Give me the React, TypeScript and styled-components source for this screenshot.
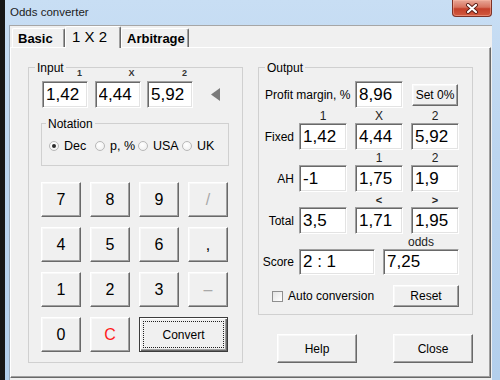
import { createGlobalStyle, styled } from 'styled-components';

const GlobalStyle = createGlobalStyle`
    html, body {
        margin: 0;
        padding: 0;
        background: #1b1b1b;
    }
    body {
        width: 500px;
        height: 380px;
        overflow: hidden;
        font-family: "Liberation Sans", Arial, sans-serif;
        color: #000;
    }
    * {
        box-sizing: border-box;
    }
`;

const App = () => {
    return (
        <>
            <GlobalStyle />
            <Screen>
                <DesktopEdge />
                <Window>
                    <TitleBar>
                        <Title>Odds converter</Title>
                        <CloseButton>
                            <svg width="14" height="11" viewBox="0 0 14 11">
                                <path d="M3 2 L11 9 M11 2 L3 9" stroke="#5a1c14" strokeWidth="4" strokeLinecap="round" />
                                <path d="M3 2 L11 9 M11 2 L3 9" stroke="#ffffff" strokeWidth="2.2" strokeLinecap="round" />
                            </svg>
                        </CloseButton>
                    </TitleBar>
                    <Client>
                        <TabStrip>
                            <Tab $w={53}>Basic</Tab>
                            <Tab $w={56} $active>1 X 2</Tab>
                            <Tab $w={68}>Arbitrage</Tab>
                        </TabStrip>
                        <Panel>
                            <InputSide />
                            <OutputSide />
                        </Panel>
                    </Client>
                </Window>
            </Screen>
        </>
    );
};

const InputSide = () => {
    const keys = ['7', '8', '9', '/', '4', '5', '6', ',', '1', '2', '3', '–', '0', 'C'];
    return (
        <Group $w={215}>
            <Caption $indent={6}>Input</Caption>
            <SmallHeads>
                <SmallHead>1</SmallHead>
                <SmallHead>X</SmallHead>
                <SmallHead>2</SmallHead>
            </SmallHeads>
            <InputRow>
                <InputCells>
                    <TextBox defaultValue="1,42" />
                    <TextBox defaultValue="4,44" />
                    <TextBox defaultValue="5,92" />
                </InputCells>
                <Arrow width="9" height="13" viewBox="0 0 9 13">
                    <polygon points="9,0 9,13 0,6.5" fill="#7b7b7b" />
                </Arrow>
            </InputRow>
            <NotationGroup>
                <Caption $indent={4}>Notation</Caption>
                <RadioRow>
                    <RadioItem $w={46}><Radio $checked />Dec</RadioItem>
                    <RadioItem $w={43}><Radio />p, %</RadioItem>
                    <RadioItem $w={44}><Radio />USA</RadioItem>
                    <RadioItem><Radio />UK</RadioItem>
                </RadioRow>
            </NotationGroup>
            <Keypad>
                {keys.map((k) => (
                    <Key key={k} $tone={k === 'C' ? 'red' : k === '/' || k === '–' ? 'dim' : 'normal'}>
                        {k}
                    </Key>
                ))}
                <ConvertButton>Convert</ConvertButton>
            </Keypad>
        </Group>
    );
};

const OutputSide = () => {
    return (
        <RightColumn>
            <Group $w={215} $pb={7}>
                <Caption $indent={6}>Output</Caption>
                <ProfitRow>
                    <ProfitLabel>Profit margin, %</ProfitLabel>
                    <TextBox $w={48} defaultValue="8,96" />
                    <SmallButton>Set 0%</SmallButton>
                </ProfitRow>
                <HeadRow>
                    <Cells>
                        <ColHead>1</ColHead>
                        <ColHead>X</ColHead>
                        <ColHead>2</ColHead>
                    </Cells>
                </HeadRow>
                <DataRow>
                    <RowLabel>Fixed</RowLabel>
                    <Cells>
                        <TextBox $w={48} defaultValue="1,42" />
                        <TextBox $w={48} defaultValue="4,44" />
                        <TextBox $w={48} defaultValue="5,92" />
                    </Cells>
                </DataRow>
                <HeadRow>
                    <Cells>
                        <ColHead />
                        <ColHead>1</ColHead>
                        <ColHead>2</ColHead>
                    </Cells>
                </HeadRow>
                <DataRow>
                    <RowLabel>AH</RowLabel>
                    <Cells>
                        <TextBox $w={48} defaultValue="-1" />
                        <TextBox $w={48} defaultValue="1,75" />
                        <TextBox $w={48} defaultValue="1,9" />
                    </Cells>
                </DataRow>
                <HeadRow>
                    <Cells>
                        <ColHead />
                        <ColHead $bold>&lt;</ColHead>
                        <ColHead $bold>&gt;</ColHead>
                    </Cells>
                </HeadRow>
                <DataRow>
                    <RowLabel>Total</RowLabel>
                    <Cells>
                        <TextBox $w={48} defaultValue="3,5" />
                        <TextBox $w={48} defaultValue="1,71" />
                        <TextBox $w={48} defaultValue="1,95" />
                    </Cells>
                </DataRow>
                <HeadRow>
                    <WideCells>
                        <ColHead />
                        <ColHead>odds</ColHead>
                    </WideCells>
                </HeadRow>
                <DataRow $h={26}>
                    <RowLabel>Score</RowLabel>
                    <WideCells>
                        <TextBox $w={76} $h={26} defaultValue="2 : 1" />
                        <TextBox $w={76} $h={26} defaultValue="7,25" />
                    </WideCells>
                </DataRow>
                <OptionRow>
                    <CheckBox />
                    <OptionText>Auto conversion</OptionText>
                    <SmallButton $w={66} $push>Reset</SmallButton>
                </OptionRow>
            </Group>
            <DialogButtons>
                <DialogButton>Help</DialogButton>
                <DialogButton>Close</DialogButton>
            </DialogButtons>
        </RightColumn>
    );
};

export default App;


const Screen = styled.div`
    display: flex;
    width: 500px;
    height: 380px;
`;

const DesktopEdge = styled.div`
    width: 5px;
    background: #171717;
`;

const Window = styled.div`
    flex: 1;
    display: flex;
    flex-direction: column;
    background: linear-gradient(180deg, #c8def4 0%, #bcd5ef 40%, #b3cfec 100%);
`;

const TitleBar = styled.div`
    height: 25px;
    display: flex;
    justify-content: space-between;
    align-items: flex-start;
    padding-left: 5px;
`;

const Title = styled.div`
    margin-top: 5px;
    font-size: 11.5px;
    line-height: 14px;
    color: #1c1c1c;
`;

const CloseButton = styled.div`
    width: 40px;
    height: 17px;
    margin-right: 8px;
    display: flex;
    align-items: center;
    justify-content: center;
    border: 1px solid #7d3126;
    border-top: none;
    border-radius: 0 0 4px 4px;
    background: linear-gradient(180deg, #e8a898 0%, #d7735f 45%, #c4402a 55%, #d25a3f 100%);
    box-shadow: inset 0 0 0 1px rgba(255, 190, 170, 0.45);
`;

const Client = styled.div`
    flex: 1;
    display: flex;
    flex-direction: column;
    margin: 0 8px 0 4px;
    padding-bottom: 2px;
    background: #f0f0f0;
    border-left: 1px solid #9aaabb;
    border-top: 1px solid #a6a6a6;
`;

const TabStrip = styled.div`
    height: 21px;
    display: flex;
    align-items: flex-end;
    padding-left: 2px;
`;

const Tab = styled.div<{ $w: number; $active?: boolean }>`
    position: relative;
    z-index: ${(p) => (p.$active ? 1 : 0)};
    width: ${(p) => p.$w}px;
    height: ${(p) => (p.$active ? 22 : 19)}px;
    margin-bottom: ${(p) => (p.$active ? -1 : 0)}px;
    padding-left: ${(p) => (p.$active ? 6 : 5)}px;
    padding-top: ${(p) => (p.$active ? 2 : 2)}px;
    background: #f0f0f0;
    border-top: 1px solid #ffffff;
    border-left: 1px solid #ffffff;
    border-right: 1px solid #696969;
    box-shadow: inset -1px 0 0 #a0a0a0;
    border-radius: 2px 2px 0 0;
    font-size: ${(p) => (p.$active ? 15 : 13)}px;
    font-weight: ${(p) => (p.$active ? 'normal' : 'bold')};
    line-height: 16px;
    white-space: nowrap;
`;

const Panel = styled.div`
    flex: 1;
    display: flex;
    align-items: flex-start;
    gap: 15px;
    margin-right: 1px;
    padding: 19px 0 0 17px;
    border: 1px solid;
    border-color: #ffffff #696969 #696969 #ffffff;
    box-shadow: inset -1px -1px 0 #a0a0a0;
`;

const Group = styled.div<{ $w?: number; $pb?: number }>`
    width: ${(p) => (p.$w ? `${p.$w}px` : 'auto')};
    border: 1px solid #d0d0d0;
    padding-bottom: ${(p) => p.$pb ?? 10}px;
`;

const Caption = styled.div<{ $indent: number }>`
    width: fit-content;
    margin: -7px 0 -7px ${(p) => p.$indent}px;
    padding: 0 2px;
    background: #f0f0f0;
    font-size: 12px;
    line-height: 14px;
`;

const SmallHeads = styled.div`
    display: grid;
    grid-template-columns: repeat(3, 46px);
    column-gap: 6.5px;
    margin-top: -1px;
    padding-left: 13px;
    height: 10px;
`;

const SmallHead = styled.div`
    text-align: right;
    padding-right: 6px;
    font-size: 9px;
    font-weight: bold;
    line-height: 10px;
    color: #333;
`;

const InputRow = styled.div`
    display: flex;
    align-items: center;
    margin-top: 3px;
    padding-left: 13px;
`;

const InputCells = styled.div`
    display: grid;
    grid-template-columns: repeat(3, 46px);
    column-gap: 6.5px;
`;

const Arrow = styled.svg`
    margin-left: 18px;
    display: block;
`;

const TextBox = styled.input<{ $w?: number; $h?: number }>`
    display: block;
    width: ${(p) => p.$w ?? 46}px;
    height: ${(p) => p.$h ?? 27}px;
    margin: 0;
    padding: 0 0 0 3px;
    background: #ffffff;
    border: 1px solid;
    border-color: #a0a0a0 #ffffff #ffffff #a0a0a0;
    box-shadow: inset 1px 1px 0 #696969, inset -1px -1px 0 #e3e3e3;
    font-family: "Liberation Sans", Arial, sans-serif;
    font-size: 17px;
    color: #000;
    outline: none;
`;

const NotationGroup = styled.div`
    margin: 15px 13px 0 12px;
    border: 1px solid #d0d0d0;
`;

const RadioRow = styled.div`
    display: flex;
    align-items: center;
    height: 14px;
    margin: 15px 0 12px 7px;
`;

const RadioItem = styled.div<{ $w?: number }>`
    display: flex;
    align-items: center;
    width: ${(p) => (p.$w ? `${p.$w}px` : 'auto')};
    font-size: 12.5px;
    white-space: nowrap;
`;

const Radio = styled.span<{ $checked?: boolean }>`
    display: inline-flex;
    align-items: center;
    justify-content: center;
    width: 10px;
    height: 10px;
    margin-right: 5px;
    border-radius: 50%;
    border: 1px solid #b8b8b8;
    background: radial-gradient(circle at 40% 35%, #ffffff 0%, #ececec 100%);
    &::after {
        content: '';
        display: ${(p) => (p.$checked ? 'block' : 'none')};
        width: 4px;
        height: 4px;
        border-radius: 50%;
        background: #2a2a2a;
    }
`;

const Keypad = styled.div`
    display: grid;
    grid-template-columns: repeat(4, 40px);
    grid-auto-rows: 35px;
    column-gap: 9px;
    row-gap: 10px;
    margin: 16px 0 0 12px;
`;

const RaisedButton = styled.button`
    margin: 0;
    padding: 0;
    background: #f0f0f0;
    border: 1px solid;
    border-color: #ffffff #696969 #696969 #ffffff;
    box-shadow: inset -1px -1px 0 #a0a0a0, inset 1px 1px 0 #f8f8f8;
    font-family: "Liberation Sans", Arial, sans-serif;
    font-size: 12px;
    color: #000;
    cursor: pointer;
`;

const Key = styled(RaisedButton)<{ $tone: 'normal' | 'red' | 'dim' }>`
    font-size: 16px;
    color: ${(p) => (p.$tone === 'red' ? '#ff1a1a' : p.$tone === 'dim' ? '#a8a8a8' : '#000')};
`;

const ConvertButton = styled(RaisedButton)`
    grid-column: span 2;
    border: 1px solid #3c3c3c;
    box-shadow: inset 1px 1px 0 #ffffff, inset -1px -1px 0 #696969, inset -2px -2px 0 #a0a0a0;
    outline: 1px dotted #202020;
    outline-offset: -5px;
    font-size: 12px;
`;

const RightColumn = styled.div`
    display: flex;
    flex-direction: column;
`;

const ProfitRow = styled.div`
    display: flex;
    align-items: center;
    margin-top: 13px;
`;

const ProfitLabel = styled.div`
    width: 96px;
    padding-left: 6px;
    font-size: 12px;
    white-space: nowrap;
`;

const SmallButton = styled(RaisedButton)<{ $w?: number; $push?: boolean }>`
    width: ${(p) => p.$w ?? 46}px;
    height: 22px;
    margin-left: ${(p) => (p.$push ? 'auto' : '9px')};
    margin-right: ${(p) => (p.$push ? '13px' : '0')};
`;

const HeadRow = styled.div`
    display: flex;
    height: 13px;
    margin-top: 2px;
    padding-left: 40px;
`;

const Cells = styled.div`
    display: grid;
    grid-template-columns: repeat(3, 48px);
    column-gap: 8px;
`;

const WideCells = styled.div`
    display: grid;
    grid-template-columns: repeat(2, 76px);
    column-gap: 8px;
`;

const ColHead = styled.div<{ $bold?: boolean }>`
    text-align: center;
    font-size: ${(p) => (p.$bold ? 11 : 12)}px;
    font-weight: ${(p) => (p.$bold ? 'bold' : 'normal')};
    line-height: 13px;
    color: #222;
`;

const DataRow = styled.div<{ $h?: number }>`
    display: flex;
    align-items: center;
    height: ${(p) => p.$h ?? 27}px;
`;

const RowLabel = styled.div`
    width: 35px;
    margin-right: 5px;
    text-align: right;
    font-size: 12px;
`;

const OptionRow = styled.div`
    display: flex;
    align-items: center;
    margin-top: 10px;
    padding-left: 13px;
`;

const CheckBox = styled.span`
    width: 11px;
    height: 11px;
    border: 1px solid #8f8f8f;
    background: linear-gradient(135deg, #e4e4e4 0%, #ffffff 100%);
`;

const OptionText = styled.span`
    margin-left: 5px;
    font-size: 12px;
`;

const DialogButtons = styled.div`
    display: flex;
    gap: 36px;
    margin-top: 19px;
    padding-left: 19px;
`;

const DialogButton = styled(RaisedButton)`
    width: 80px;
    height: 29px;
    font-size: 12px;
`;
